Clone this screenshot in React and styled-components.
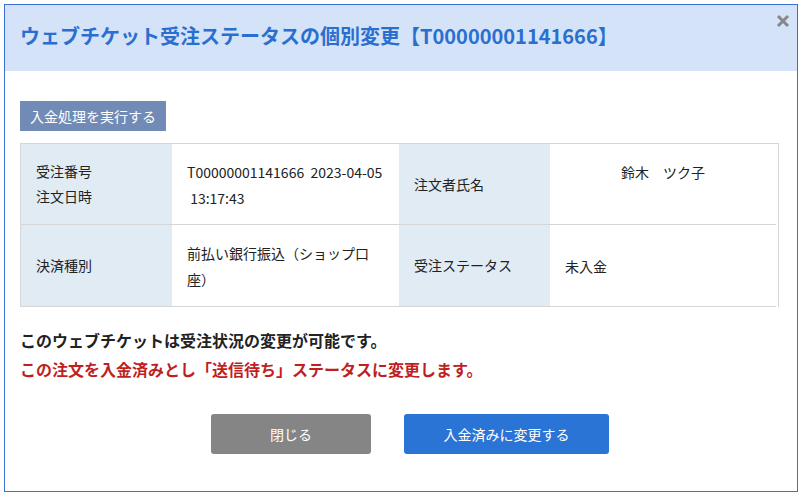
import React from 'react';
import styled, { createGlobalStyle } from 'styled-components';

const GlobalStyle = createGlobalStyle`
  html, body {
    margin: 0;
    padding: 0;
    background: #fff;
  }
  body {
    font-family: "Noto Sans CJK JP", "Noto Sans", sans-serif;
    color: #222;
  }
`;

const Dialog = styled.div`
  position: relative;
  box-sizing: border-box;
  width: 794px;
  height: 488px;
  margin: 4px;
  border: 1px solid #3b70d6;
  background: #fff;
`;

const Header = styled.div`
  height: 66px;
  box-sizing: border-box;
  background: #d4e3f7;
  display: flex;
  align-items: center;
  padding: 0 15px 5px;
`;

const Title = styled.h1`
  margin: 0;
  font-size: 20px;
  font-weight: 700;
  color: #2a6fd0;
`;

const CloseButton = styled.button`
  position: absolute;
  top: 8px;
  right: 6px;
  width: 16px;
  height: 16px;
  padding: 0;
  border: 0;
  background: none;
  display: flex;
  align-items: center;
  justify-content: center;
`;

const Body = styled.div`
  padding: 30px 15px 0;
`;

const Badge = styled.div`
  display: inline-block;
  background: #728ab6;
  color: #fff;
  font-size: 14px;
  line-height: 30px;
  padding: 0 10px;
`;

const Table = styled.div`
  width: 757px;
  margin-top: 12px;
  display: grid;
  grid-template-columns: 151px 227px 151px 226px;
  border: 1px solid #d6d6d6;
  border-bottom: 0;
`;

const Label = styled.div`
  background: #e1ebf4;
  border-bottom: 1px solid #d6d6d6;
  font-size: 14px;
  line-height: 25px;
  padding: 15px;
  height: ${p => p.$h}px;
  box-sizing: border-box;
  display: flex;
  flex-direction: column;
  justify-content: center;
`;

const Value = styled.div`
  border-bottom: 1px solid #d6d6d6;
  font-size: 14px;
  line-height: 26px;
  padding: ${p => p.$top ? '15px' : '0'} 15px 0;
  height: ${p => p.$h}px;
  box-sizing: border-box;
  display: flex;
  flex-direction: column;
  justify-content: ${p => p.$top ? 'flex-start' : 'center'};
  text-align: ${p => p.$center ? 'center' : 'left'};
`;

const Messages = styled.div`
  margin-top: 19px;
  font-size: 16px;
  font-weight: 700;
  line-height: 29px;
`;

const Note = styled.p`
  margin: 0;
  color: ${p => p.$danger ? '#c01f1f' : '#222'};
`;

const Actions = styled.div`
  margin-top: 30px;
  padding-left: 18px;
  display: flex;
  justify-content: center;
  gap: 33px;
`;

const Button = styled.button`
  height: 40px;
  width: ${p => p.$w}px;
  border: 0;
  border-radius: 3px;
  background: ${p => p.$primary ? '#2a74d6' : '#858585'};
  color: #fff;
  font-family: "Noto Sans CJK JP", sans-serif;
  font-size: 14px;
`;

export default function App() {
  return (
    <>
      <GlobalStyle />
      <Dialog>
        <Header>
          <Title>ウェブチケット受注ステータスの個別変更【T00000001141666】</Title>
        </Header>
        <CloseButton aria-label="閉じる">
          <svg width="14" height="14" viewBox="0 0 14 14">
            <path d="M2 2 L12 12 M12 2 L2 12" stroke="#888" strokeWidth="3" />
          </svg>
        </CloseButton>
        <Body>
          <Badge>入金処理を実行する</Badge>
          <Table>
            <Label $h={81}>
              <span>受注番号</span>
              <span>注文日時</span>
            </Label>
            <Value $h={81} $top>
              <span>T00000001141666 &nbsp;2023-04-05 &nbsp;13:17:43</span>
            </Value>
            <Label $h={81}>注文者氏名</Label>
            <Value $h={81} $top $center>鈴木　ツク子</Value>
            <Label $h={82}>決済種別</Label>
            <Value $h={82}>前払い銀行振込（ショップ口座）</Value>
            <Label $h={82}>受注ステータス</Label>
            <Value $h={82}>未入金</Value>
          </Table>
          <Messages>
            <Note>このウェブチケットは受注状況の変更が可能です。</Note>
            <Note $danger>この注文を入金済みとし「送信待ち」ステータスに変更します。</Note>
          </Messages>
          <Actions>
            <Button $w={160}>閉じる</Button>
            <Button $w={205} $primary>入金済みに変更する</Button>
          </Actions>
        </Body>
      </Dialog>
    </>
  );
}
